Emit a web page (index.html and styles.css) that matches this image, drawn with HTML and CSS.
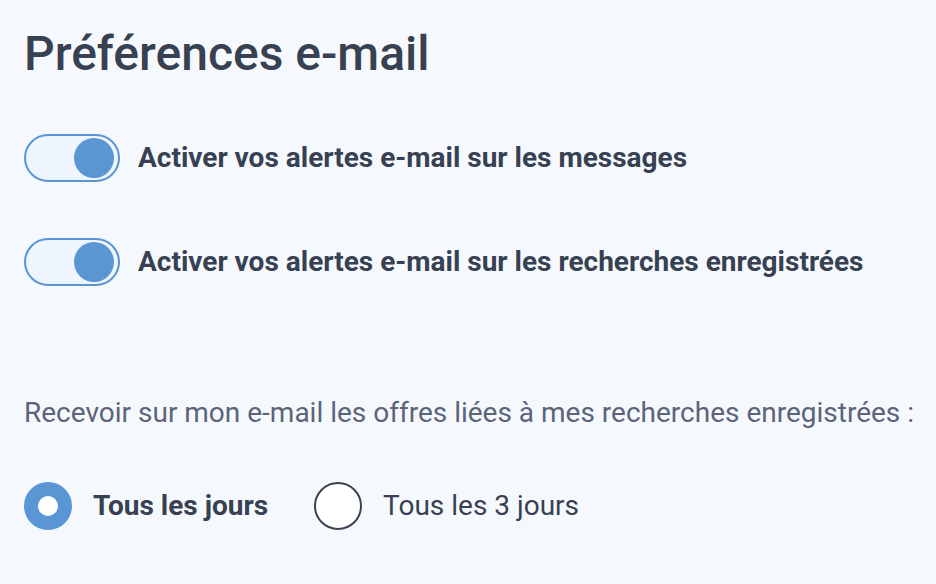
FILE: index.html
```html
<!DOCTYPE html>
<html lang="fr">
<head>
<meta charset="utf-8">
<title>Préférences e-mail</title>
<link rel="stylesheet" href="styles.css">
</head>
<body>
<main class="prefs">
  <h1 class="title">Préférences e-mail</h1>
  <div class="toggles">
    <label class="toggle-row">
      <span class="switch on"><span class="knob"></span></span>
      <span class="toggle-label">Activer vos alertes e-mail sur les messages</span>
    </label>
    <label class="toggle-row">
      <span class="switch on"><span class="knob"></span></span>
      <span class="toggle-label">Activer vos alertes e-mail sur les recherches enregistrées</span>
    </label>
  </div>
  <p class="question">Recevoir sur mon e-mail les offres liées à mes recherches enregistrées :</p>
  <div class="radios">
    <label class="radio-row">
      <span class="radio checked"></span>
      <span class="radio-label bold">Tous les jours</span>
    </label>
    <label class="radio-row">
      <span class="radio"></span>
      <span class="radio-label">Tous les 3 jours</span>
    </label>
  </div>
</main>
</body>
</html>
```
FILE: styles.css
```css
html, body {
  margin: 0;
  padding: 0;
  background: #f5f9fe;
}
body {
  font-family: Roboto, "Liberation Sans", Arial, sans-serif;
  color: #374151;
}
.prefs {
  padding: 26px 0 0 24px;
}
.title {
  margin: 0;
  font-size: 48px;
  line-height: 56px;
  font-weight: 500;
  color: #374151;
}
.toggles {
  margin-top: 52px;
  display: flex;
  flex-direction: column;
  gap: 56px;
}
.toggle-row {
  display: flex;
  align-items: center;
  gap: 18px;
}
.switch {
  box-sizing: border-box;
  width: 96px;
  height: 48px;
  border: 2px solid #5a96d3;
  border-radius: 24px;
  background: #eef5fe;
  display: flex;
  align-items: center;
  justify-content: flex-end;
  padding: 0 4px;
}
.knob {
  width: 40px;
  height: 40px;
  border-radius: 50%;
  background: #5a96d3;
}
.toggle-label {
  font-size: 28px;
  line-height: 32px;
  font-weight: 700;
  color: #374151;
}
.question {
  margin: 111px 0 0 0;
  font-size: 28px;
  line-height: 32px;
  color: #5b6478;
  white-space: nowrap;
}
.radios {
  margin-top: 53px;
  display: flex;
  align-items: center;
  gap: 46px;
}
.radio-row {
  display: flex;
  align-items: center;
  gap: 21px;
}
.radio {
  box-sizing: border-box;
  width: 48px;
  height: 48px;
  border-radius: 50%;
  border: 2px solid #3a4252;
  background: #fff;
}
.radio.checked {
  border: 14px solid #5a96d3;
}
.radio-label {
  font-size: 28px;
  line-height: 32px;
  color: #374151;
}
.radio-label.bold {
  font-weight: 700;
}
```
